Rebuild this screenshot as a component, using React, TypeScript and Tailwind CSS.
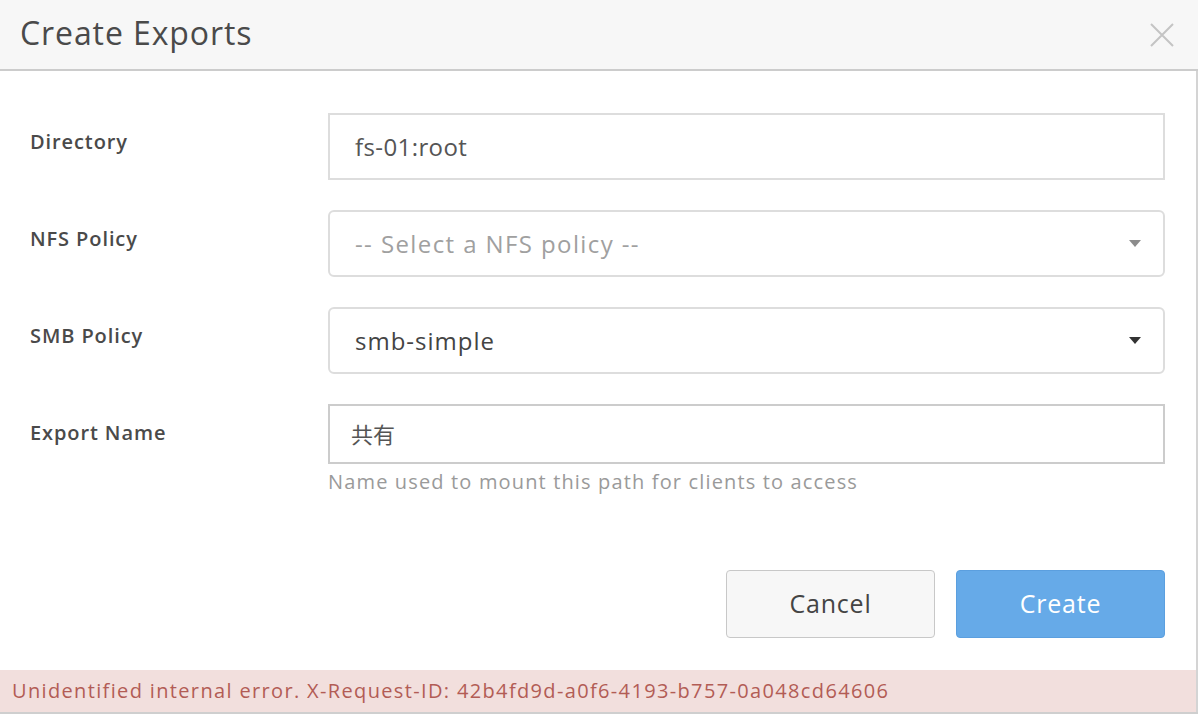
import React from 'react'

const font = { fontFamily: '"Open Sans", "Noto Sans CJK JP", sans-serif' }

function Caret({ dark }: { dark?: boolean }) {
  return (
    <svg width="12" height="7" viewBox="0 0 12 7" className="shrink-0">
      <path d="M0 0 L12 0 L6 7 Z" fill={dark ? '#333333' : '#8c8c8c'} />
    </svg>
  )
}

function Row({ label, children }: { label: string; children: React.ReactNode }) {
  return (
    <div className="flex items-start">
      <div className="w-[328px] shrink-0 pl-[30px] pt-[14px] text-[20px] font-semibold tracking-[0.9px] text-[#4a4a4a]">{label}</div>
      <div className="flex-1">{children}</div>
    </div>
  )
}

export default function App() {
  return (
    <div className="w-[1198px] h-[714px] bg-white flex flex-col border-b-2 border-[#cfcfcf]" style={font}>
      <div className="h-[71px] shrink-0 bg-[#f7f7f7] border-b-2 border-[#cccccc] flex items-center justify-between pl-[20px] pr-[24px]">
        <h1 className="text-[32px] tracking-[0.9px] text-[#4a4a4a] leading-none pb-[3px]">Create Exports</h1>
        <svg width="24" height="24" viewBox="0 0 24 24">
          <path d="M1 1 L23 23 M23 1 L1 23" stroke="#c4c4c4" strokeWidth="2" />
        </svg>
      </div>
      <div className="flex-1 flex flex-col border-r-2 border-[#d4d4d4]">
        <div className="flex-1 flex flex-col pt-[42px] pr-[31px]">
          <div className="flex flex-col gap-[30px]">
            <Row label="Directory">
              <div className="h-[67px] border-2 border-[#dddddd] flex items-center px-[25px] text-[24px] tracking-[0.4px] text-[#555555]">
                fs-01:root
              </div>
            </Row>
            <Row label="NFS Policy">
              <div className="h-[67px] border-2 border-[#dddddd] rounded-[6px] flex items-center justify-between pl-[25px] pr-[22px] text-[24px] tracking-[1.4px] text-[#a0a0a0]">
                <span>-- Select a NFS policy --</span>
                <Caret />
              </div>
            </Row>
            <Row label="SMB Policy">
              <div className="h-[67px] border-2 border-[#dddddd] rounded-[6px] flex items-center justify-between pl-[25px] pr-[22px] text-[24px] tracking-[1px] text-[#444444]">
                <span>smb-simple</span>
                <Caret dark />
              </div>
            </Row>
            <Row label="Export Name">
              <div className="h-[60px] border-2 border-[#cccccc] flex items-center px-[21px] text-[22px] text-[#555555]">
                共有
              </div>
              <div className="pt-[3px] text-[20px] tracking-[1.15px] text-[#9a9a9a]">Name used to mount this path for clients to access</div>
            </Row>
          </div>
          <div className="flex justify-end gap-[21px] mt-[73px]">
            <button className="w-[209px] h-[68px] rounded-[4px] border border-[#c8c8c8] bg-[#f7f7f7] text-[25px] tracking-[0.8px] text-[#444444]">
              Cancel
            </button>
            <button className="w-[209px] h-[68px] rounded-[4px] border border-[#5b9fdf] bg-[#66aae8] text-[25px] tracking-[0.8px] text-white">
              Create
            </button>
          </div>
        </div>
        <div className="h-[42px] shrink-0 bg-[#f2dfdd] flex items-center pl-[12px] text-[20px] tracking-[1.35px] text-[#b25c55]">
          Unidentified internal error. X-Request-ID: 42b4fd9d-a0f6-4193-b757-0a048cd64606
        </div>
      </div>
    </div>
  )
}
